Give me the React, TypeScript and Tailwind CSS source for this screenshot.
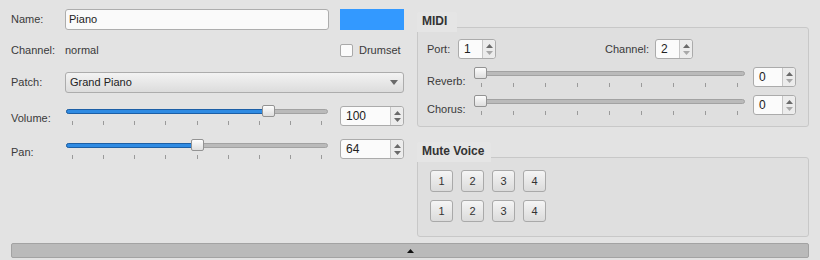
import React from "react";

const font = { fontFamily: '"Liberation Sans", Arial, sans-serif' };

function Up({ c = "#6a6a6a" }: { c?: string }) {
  return (
    <svg width="7" height="4" viewBox="0 0 7 4">
      <path d="M0 4 L3.5 0 L7 4 Z" fill={c} />
    </svg>
  );
}
function Down({ c = "#6a6a6a" }: { c?: string }) {
  return (
    <svg width="7" height="4" viewBox="0 0 7 4">
      <path d="M0 0 L7 0 L3.5 4 Z" fill={c} />
    </svg>
  );
}

function Spin({ value, w, dim }: { value: string; w: string; dim?: boolean }) {
  return (
    <div className={`flex h-[20px] ${w} shrink-0 rounded-[3px] border border-[#ababab] bg-[#fbfbfb]`}>
      <div className="flex-1 pl-[5px] text-[12px] leading-[18px] text-[#222]">{value}</div>
      <div className="flex w-[13px] flex-col items-center justify-center gap-[3px] rounded-r-[3px] border-l border-[#c6c6c6] bg-[#ececec]">
        <Up />
        <Down c={dim ? "#a8a8a8" : "#6a6a6a"} />
      </div>
    </div>
  );
}

function Slider({ w, frac, blue, inset }: { w: number; frac: number; blue?: boolean; inset: string }) {
  const left = Math.round(frac * (w - 13));
  return (
    <div className="relative h-[20px] shrink-0" style={{ width: w }}>
      <div className="absolute left-0 right-0 top-[4px] h-[5px] rounded-[3px] border border-[#a2a2a2] bg-[#bababa]" />
      {blue && (
        <div
          className="absolute left-0 top-[4px] h-[5px] rounded-[3px] border border-[#1c5fa6] bg-[#2f8be3]"
          style={{ width: left + 6 }}
        />
      )}
      <div
        className="absolute top-0 h-[12px] w-[13px] rounded-[2px] border border-[#939393] bg-gradient-to-b from-[#fdfdfd] to-[#dedede]"
        style={{ left }}
      />
      <div className={`absolute left-0 right-0 top-[16px] flex justify-between ${inset}`}>
        {Array.from({ length: 9 }).map((_, i) => (
          <div key={i} className="h-[4px] w-px bg-[#9a9a9a]" />
        ))}
      </div>
    </div>
  );
}

function GroupTitle({ title, w }: { title: string; w: string }) {
  return (
    <div
      className={`relative z-10 mb-[-5px] h-[20px] ${w} rounded-t-[2px] bg-[#e5e5e5] pl-[5px] text-[12px] font-bold leading-[18px] text-[#333]`}
    >
      {title}
    </div>
  );
}

function MuteBtn({ n }: { n: number }) {
  return (
    <div className="flex h-[22px] w-[23px] items-center justify-center rounded-[3px] border border-[#a9a9a9] bg-gradient-to-b from-[#f5f5f5] to-[#dbdbdb] text-[11px] text-[#333]">
      {n}
    </div>
  );
}

export default function App() {
  return (
    <div className="h-[260px] w-[820px] overflow-hidden bg-[#e3e3e3] px-[11px] text-[11px] text-[#3a3a3a]" style={font}>
      <div className="flex h-[237px]">
        {/* Left */}
        <div className="flex w-[393px] flex-col pt-[9px]">
          <div className="flex h-[21px] items-center">
            <div className="w-[54px]">Name:</div>
            <div className="flex h-[21px] w-[264px] items-center rounded-[3px] border border-[#adadad] bg-[#fafafa] pl-[3px] text-[#222]">
              Piano
            </div>
            <div className="ml-[11px] h-[21px] w-[64px] bg-[#3399ff]" />
          </div>
          <div className="mt-[10px] flex h-[20px] items-center">
            <div className="w-[54px]">Channel:</div>
            <div className="w-[275px]">normal</div>
            <div className="h-[13px] w-[13px] rounded-[2px] border border-[#a9a9a9] bg-[#fbfbfb]" />
            <div className="ml-[6px]">Drumset</div>
          </div>
          <div className="mt-[12px] flex h-[21px] items-center">
            <div className="w-[54px]">Patch:</div>
            <div className="flex h-[21px] flex-1 items-center justify-between rounded-[3px] border border-[#acacac] bg-gradient-to-b from-[#f3f3f3] to-[#dcdcdc] pl-[4px] pr-[5px] text-[#222]">
              <span>Grand Piano</span>
              <svg width="8" height="5" viewBox="0 0 8 5">
                <path d="M0 0 L8 0 L4 5 Z" fill="#6a6a6a" />
              </svg>
            </div>
          </div>
          <div className="mt-[12px] flex h-[21px] items-start">
            <div className="w-[55px] pt-[5px]">Volume:</div>
            <Slider w={262} frac={100 / 127} blue inset="px-[6px]" />
            <div className="ml-[12px] mt-[1px]">
              <Spin value="100" w="w-[64px]" />
            </div>
          </div>
          <div className="mt-[13px] flex h-[21px] items-start">
            <div className="w-[55px] pt-[5px]">Pan:</div>
            <Slider w={262} frac={64 / 127} blue inset="px-[6px]" />
            <div className="ml-[12px]">
              <Spin value="64" w="w-[64px]" />
            </div>
          </div>
        </div>

        {/* Right */}
        <div className="ml-[13px] flex w-[392px] flex-col pt-[12px]">
          <GroupTitle title="MIDI" w="w-[40px]" />
          <div className="h-[100px] rounded-[3px] border border-[#c8c8c8] bg-[#dfdfdf] pl-[9px] pt-[11px]">
            <div className="flex h-[20px] items-center">
              <div className="w-[31px]">Port:</div>
              <Spin value="1" w="w-[38px]" dim />
              <div className="ml-[109px] w-[50px]">Channel:</div>
              <Spin value="2" w="w-[38px]" dim />
            </div>
            <div className="mt-[8px] flex h-[20px] items-start">
              <div className="w-[47px] pt-[6px]">Reverb:</div>
              <Slider w={271} frac={0} inset="px-[7px]" />
              <div className="ml-[8px]">
                <Spin value="0" w="w-[43px]" dim />
              </div>
            </div>
            <div className="mt-[8px] flex h-[20px] items-start">
              <div className="w-[47px] pt-[6px]">Chorus:</div>
              <Slider w={271} frac={0} inset="px-[7px]" />
              <div className="ml-[8px]">
                <Spin value="0" w="w-[43px]" dim />
              </div>
            </div>
          </div>

          <div className="mt-[15px]">
            <GroupTitle title="Mute Voice" w="w-[74px]" />
          </div>
          <div className="flex h-[80px] flex-col gap-[8px] rounded-[3px] border border-[#c8c8c8] bg-[#dfdfdf] pl-[12px] pt-[12px]">
            <div className="flex gap-[8px]">
              {[1, 2, 3, 4].map((n) => (
                <MuteBtn key={n} n={n} />
              ))}
            </div>
            <div className="flex gap-[8px]">
              {[1, 2, 3, 4].map((n) => (
                <MuteBtn key={n} n={n} />
              ))}
            </div>
          </div>
        </div>
      </div>

      <div className="mt-[6px] flex h-[15px] w-[798px] items-center justify-center rounded-[2px] border border-[#a3a3a3] bg-[#bababa]">
        <svg width="7" height="4" viewBox="0 0 7 4">
          <path d="M0 4 L3.5 0 L7 4 Z" fill="#111" />
        </svg>
      </div>
    </div>
  );
}
